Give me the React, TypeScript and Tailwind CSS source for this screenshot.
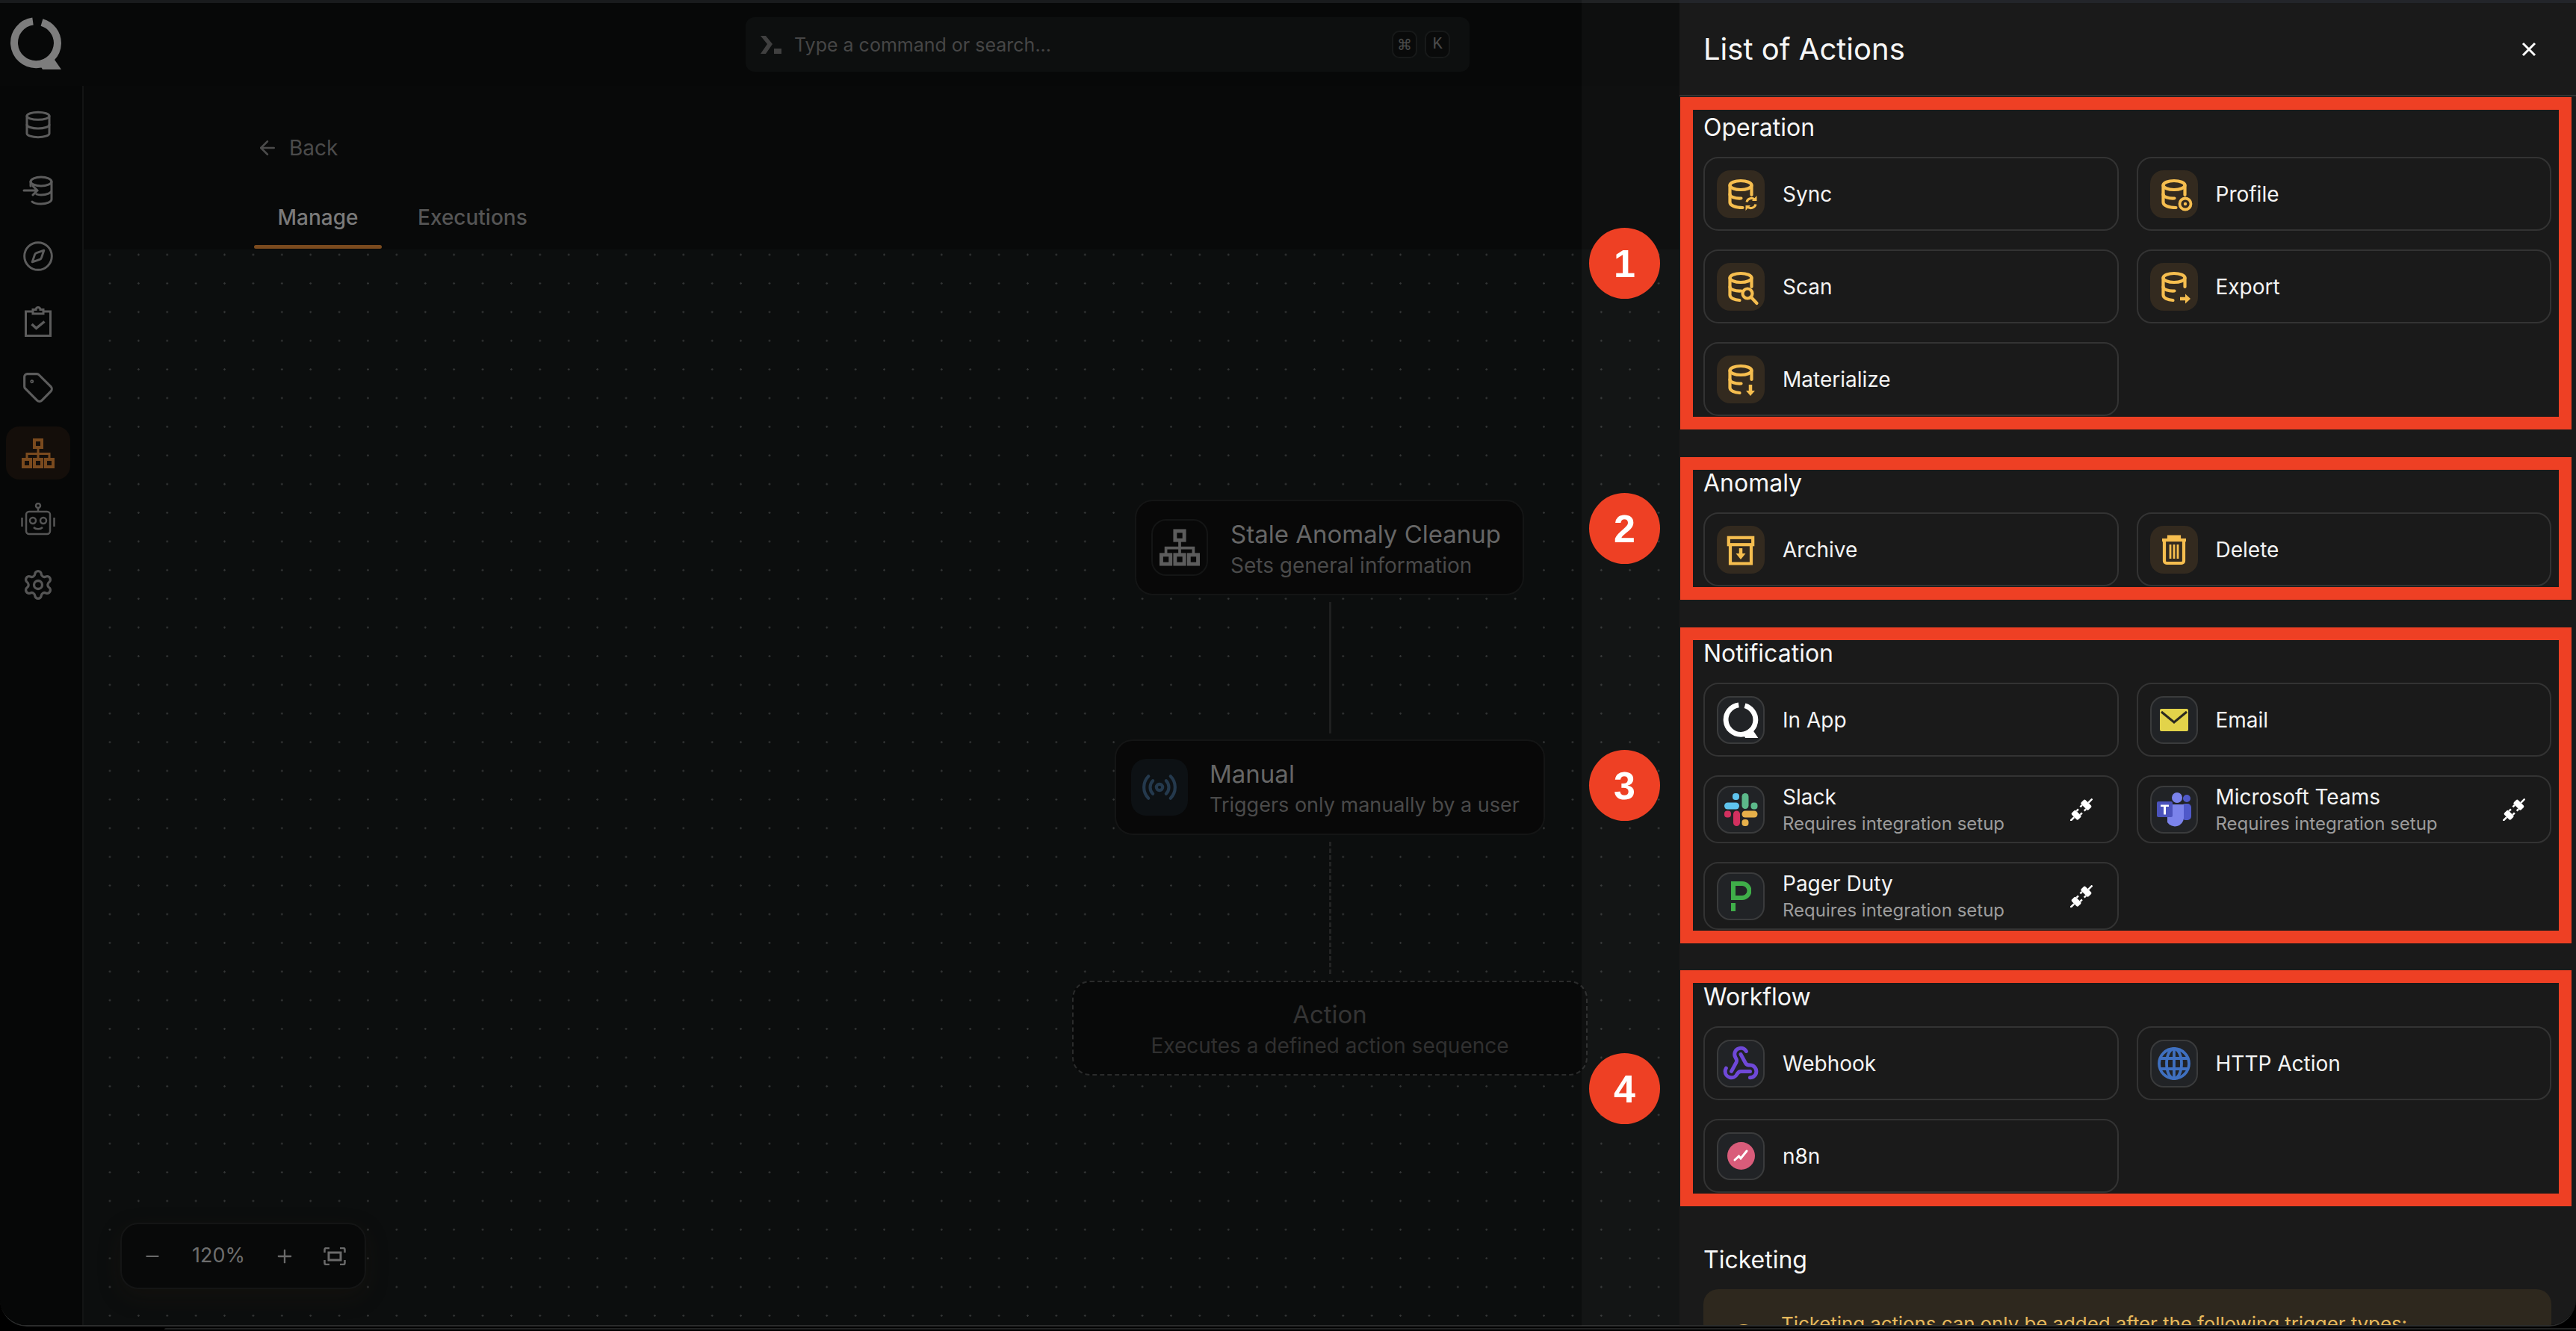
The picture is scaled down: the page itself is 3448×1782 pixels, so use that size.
import { ArrowLeft, Compass, Database, Minus, Plus, Radio, Settings, Tag, Webhook } from "lucide-react";
import type { ReactNode } from "react";

const amber = "#f6be4f";

function Sitemap({ size, color }: { size: number; color: string }) {
  return (
    <svg width={size} height={size} viewBox="0 0 44 44" fill="none" stroke={color} strokeWidth="4">
      <rect x="17" y="4" width="10" height="10" />
      <rect x="2" y="30" width="10" height="10" />
      <rect x="17" y="30" width="10" height="10" />
      <rect x="32" y="30" width="10" height="10" />
      <path d="M22 14v16M7 30v-7.500h30V30" strokeWidth="3" />
    </svg>
  );
}

function Logo({ size, color }: { size: number; color: string }) {
  return (
    <svg width={size} height={size} viewBox="0 0 70 70" fill="none">
      <path d="M31 5.500A29 29 0 1 0 64 35A29 29 0 0 0 43 7" stroke={color} strokeWidth="10" />
      <path d="M38 60L58 54L69 70H44Z" fill={color} />
    </svg>
  );
}

function DbArrow() {
  return (
    <svg width="42" height="40" viewBox="0 0 42 40" fill="none" stroke="#5c5c5c" strokeWidth="3" strokeLinecap="round">
      <ellipse cx="25" cy="8" rx="14" ry="6" />
      <path d="M39 8v24c0 3-6 6-14 6-6 0-10-1-12-3M11 8v6M39 20c0 3-6 6-14 6-2 0-4 0-6-1" />
      <path d="M2 20h18M14 14l6 6-6 6" />
    </svg>
  );
}

function ClipCheck() {
  return (
    <svg width="38" height="42" viewBox="0 0 38 42" fill="none" stroke="#5c5c5c" strokeWidth="3">
      <path d="M12 7H2.500v32.500h33V7H26" />
      <path d="M12 4.500h4a3 3 0 0 1 6 0h4V10H12Z" />
      <path d="M10.500 24l6 5.500 11-9" strokeWidth="3.500" />
    </svg>
  );
}

function Robot() {
  return (
    <svg width="46" height="44" viewBox="0 0 46 44" fill="none" stroke="#555" strokeWidth="2.500">
      <circle cx="23" cy="4" r="3" />
      <path d="M23 7v5" />
      <rect x="7" y="12" width="32" height="30" rx="4" />
      <circle cx="16" cy="24" r="4" />
      <circle cx="30" cy="24" r="4" />
      <path d="M17 33c3 3 9 3 12 0M1.500 20v12M44.500 20v12" />
    </svg>
  );
}

function PromptIcon() {
  return (
    <svg width="28" height="24" viewBox="0 0 28 24" fill="#404040">
      <path d="M0 0h7l9 11-9 13H0l9-13Z" />
      <rect x="18" y="17" width="10" height="7" />
    </svg>
  );
}

function FitIcon() {
  return (
    <svg width="30" height="24" viewBox="0 0 30 24" fill="none" stroke="#6a6a6a" strokeWidth="2.500">
      <path d="M1.500 7V3a2 2 0 0 1 2-2H8M22 1h4.500a2 2 0 0 1 2 2v4M28.500 17v4a2 2 0 0 1-2 2H22M8 23H3.500a2 2 0 0 1-2-2v-4" />
      <rect x="7" y="7" width="16" height="10" strokeWidth="3" />
    </svg>
  );
}

function DbBase({ children, short }: { children: ReactNode; short?: boolean }) {
  return (
    <svg width="64" height="64" viewBox="0 0 64 64" fill="none" stroke={amber} strokeWidth="4.200" strokeLinecap="round">
      <ellipse cx="32" cy="20" rx="14.500" ry="6" />
      <path d={short ? "M17.500 20v23c0 4 6 6.500 13 7M46.500 20v12" : "M17.500 20v23c0 4 7 7 17 7M46.500 20v13"} />
      <path d="M17.500 32c0 3.500 7 6 15 5.500" />
      {children}
    </svg>
  );
}

function SyncIcon() {
  return (
    <DbBase>
      <path d="M40 42.500a6.500 6.500 0 0 1 11-3M52 45.500a6.500 6.500 0 0 1-11 3" strokeWidth="3.200" strokeLinecap="butt" />
      <path d="M53.500 34v7h-6.500ZM38.500 54v-7h6.500Z" fill={amber} stroke="none" />
    </DbBase>
  );
}

function ProfileIcon() {
  return (
    <DbBase>
      <circle cx="47" cy="45" r="7.500" strokeWidth="3.800" />
      <circle cx="47" cy="45" r="2.200" fill={amber} stroke="none" />
    </DbBase>
  );
}

function ScanIcon() {
  return (
    <DbBase short>
      <circle cx="41" cy="41" r="6.500" />
      <path d="M46 46l7.500 8" />
    </DbBase>
  );
}

function ExportIcon() {
  return (
    <DbBase short>
      <path d="M40 48h8" strokeWidth="4.500" strokeLinecap="butt" />
      <path d="M47 41.500l7 6.500-7 6.500Z" fill={amber} stroke="none" />
    </DbBase>
  );
}

function MaterializeIcon() {
  return (
    <DbBase short>
      <path d="M45 39v9" strokeWidth="4.500" strokeLinecap="butt" />
      <path d="M39 47h12l-6 7Z" fill={amber} stroke="none" />
    </DbBase>
  );
}

function ArchiveIcon() {
  return (
    <svg width="64" height="64" viewBox="0 0 64 64" fill="none" stroke={amber} strokeWidth="4.200">
      <rect x="15.800" y="15.800" width="32.400" height="9.400" />
      <path d="M18 25v25.500h28V25" />
      <path d="M32 30v9" strokeWidth="4.500" />
      <path d="M25.500 37h13L32 45Z" fill={amber} stroke="none" />
    </svg>
  );
}

function TrashIcon() {
  return (
    <svg width="64" height="64" viewBox="0 0 64 64" fill="none" stroke={amber} strokeWidth="4.200">
      <path d="M16 19h32" />
      <path d="M25 17v-2.500h14V17" fill={amber} />
      <path d="M19 19v28a3 3 0 0 0 3 3h20a3 3 0 0 0 3-3V19" />
      <path d="M27 25v19M32 25v19M37 25v19" strokeWidth="2.800" />
    </svg>
  );
}

function EmailIcon() {
  return (
    <svg width="38" height="30" viewBox="0 0 38 30">
      <rect width="38" height="30" rx="2" fill="#e2d34a" />
      <path d="M2 4l17 14L36 4" fill="none" stroke="#2a2a20" strokeWidth="3" />
    </svg>
  );
}

function SlackIcon() {
  return (
    <svg width="45" height="44" viewBox="0 0 45 44">
      <rect x="11" y="0" width="9" height="9" rx="4" fill="#5fc4ee" />
      <rect x="0" y="12.500" width="20" height="9" rx="4.500" fill="#5fc4ee" />
      <rect x="23.500" y="0" width="9" height="21" rx="4.500" fill="#5cb98a" />
      <rect x="35.500" y="12.500" width="9" height="9" rx="4" fill="#5cb98a" />
      <rect x="0" y="23.500" width="9" height="9" rx="4" fill="#d2305f" />
      <rect x="12" y="23.500" width="9" height="20.500" rx="4.500" fill="#d2305f" />
      <rect x="23.500" y="23.500" width="21" height="9" rx="4.500" fill="#e6b04a" />
      <rect x="23.500" y="35" width="9" height="9" rx="4" fill="#e6b04a" />
    </svg>
  );
}

function TeamsIcon() {
  return (
    <svg width="46" height="46" viewBox="0 0 46 46">
      <circle cx="40" cy="8" r="5" fill="#5059c9" />
      <rect x="33" y="15" width="13" height="22" rx="5" fill="#5059c9" />
      <circle cx="27" cy="7" r="7" fill="#7b83eb" />
      <path d="M14 16h22v18a12 12 0 0 1-22 6Z" fill="#7b83eb" />
      <rect x="0" y="12" width="21" height="21" rx="2" fill="#4b53bc" />
      <path d="M5 16.500h11v2.500h-4v10.500H9V19H5Z" fill="#fff" />
    </svg>
  );
}

function PagerIcon() {
  return (
    <svg width="27" height="40" viewBox="0 0 27 40" fill="none">
      <path d="M3 25V3h12a9.500 9.500 0 0 1 0 19H3" stroke="#3fae49" strokeWidth="6" />
      <rect x="0" y="29" width="6" height="11" fill="#3fae49" />
    </svg>
  );
}

function GlobeIcon() {
  return (
    <svg width="44" height="44" viewBox="0 0 44 44" fill="none" stroke="#3f70c0" strokeWidth="3.800">
      <circle cx="22" cy="22" r="20" />
      <ellipse cx="22" cy="22" rx="10" ry="20" />
      <path d="M22 2v40M3 15h38M3 29h38" />
    </svg>
  );
}

function N8nIcon() {
  return (
    <svg width="37" height="37" viewBox="0 0 37 37">
      <circle cx="18.500" cy="18.500" r="18.500" fill="#d95c7a" />
      <path d="M10 24l5.500-5 2.500 3 8-10" fill="none" stroke="#fff" strokeWidth="3" strokeLinecap="round" />
    </svg>
  );
}

function PlugIcon() {
  return (
    <svg width="30" height="30" viewBox="0 0 30 30" fill="#fff">
      <g transform="rotate(-45 15 15)">
        <rect x="-6" y="14" width="7" height="2.500" />
        <rect x="1" y="9" width="8" height="12.500" rx="2" />
        <rect x="9" y="10.500" width="3.500" height="2.500" />
        <rect x="9" y="17.500" width="3.500" height="2.500" />
        <rect x="20" y="8" width="8" height="14" rx="2" />
        <rect x="16.500" y="10" width="3.500" height="2.500" />
        <rect x="16.500" y="17.500" width="3.500" height="2.500" />
        <rect x="28" y="13.800" width="7.500" height="2.500" />
      </g>
    </svg>
  );
}

const sideItems = [
  <Database key="db" size={40} strokeWidth={1.8} color="#5c5c5c" />,
  <DbArrow key="dba" />,
  <Compass key="compass" size={44} strokeWidth={1.6} color="#5c5c5c" />,
  <ClipCheck key="clip" />,
  <Tag key="tag" size={44} strokeWidth={1.7} color="#5c5c5c" />,
  <Sitemap key="flow" size={44} color="#7a4a1e" />,
  <Robot key="bot" />,
  <Settings key="gear" size={44} strokeWidth={1.8} color="#555" />,
];

function Card({ icon, label, sub, soft }: { icon: ReactNode; label: string; sub?: boolean; soft?: boolean }) {
  return (
    <div className={`flex items-center gap-6 rounded-[20px] border-2 border-[#333333] pl-4 pr-[33px] ${sub ? "h-[91px]" : "h-[99px]"}`}>
      <div className={`flex h-16 w-16 shrink-0 items-center justify-center rounded-[18px] ${soft ? "bg-[#332a1f]" : "border-2 border-[#3a3b3c] bg-[#212326]"}`}>
        {icon}
      </div>
      <div className={`min-w-0 flex-1 ${sub ? "pt-[3px]" : ""}`}>
        <div className="text-[28px] leading-9 text-[#f4f4f4]">{label}</div>
        {sub && <div className="text-[24px] leading-9 text-[#9c9c9c]">Requires integration setup</div>}
      </div>
      {sub && <PlugIcon />}
    </div>
  );
}

function Marked({ offset }: { offset: string }) {
  return <div className={`pointer-events-none absolute -left-[31px] -right-[27px] -bottom-[18px] border-[17px] border-[#ee4024] ${offset}`} />;
}

function Section({ title, children, mark }: { title: string; children?: ReactNode; mark?: string }) {
  return (
    <section className="relative">
      <h2 className="mb-[19px] h-10 text-[32px] font-normal leading-10 text-[#f7f7f7]">{title}</h2>
      {children && <div className="grid grid-cols-2 gap-x-6 gap-y-[25px]">{children}</div>}
      {mark && <Marked offset={mark} />}
    </section>
  );
}

function Badge({ n, className }: { n: number; className: string }) {
  return (
    <div className={`absolute left-[2127px] flex h-[95px] w-[95px] items-center justify-center rounded-full bg-[#ee4024] text-[52px] font-bold text-white [font-family:'Liberation_Sans',sans-serif] ${className}`}>
      {n}
    </div>
  );
}

export default function App() {
  return (
    <div className="relative h-[1782px] w-[3448px] overflow-hidden bg-black [font-family:Inter,sans-serif]">
      <div className="flex h-[1776px] overflow-hidden rounded-b-[36px] border-b-2 border-[#2b2c2c]">
        {/* dimmed app behind the drawer */}
        <div className="flex w-[2248px] shrink-0 flex-col bg-[#070808]">
          <div className="h-1 shrink-0 bg-[#191b1d]" />
          <header className="relative flex h-[111px] shrink-0 items-start pl-[13px] pt-[19px]">
            <Logo size={70} color="#7d7d7d" />
            <div className="ml-[915px] flex h-[73px] w-[969px] items-center rounded-xl bg-[#0d0f0f] pl-5 pr-[26px]">
              <PromptIcon />
              <span className="ml-[17px] flex-1 pt-[3px] text-[25px] text-[#464646]">Type a command or search...</span>
              <kbd className="flex h-[37px] w-[34px] items-center justify-center rounded-[10px] border-2 border-[#171919] bg-[#090a0a] text-[20px] text-[#4a4a4a] [font-family:'DejaVu_Sans',sans-serif]">⌘</kbd>
              <kbd className="ml-[10px] flex h-[37px] w-[34px] items-center justify-center rounded-[10px] border-2 border-[#171919] bg-[#090a0a] text-[22px] text-[#4a4a4a]">K</kbd>
            </div>
          </header>
          <div className="flex min-h-0 flex-1">
            <aside className="flex w-[112px] shrink-0 flex-col items-center gap-[17px] border-r-2 border-[#131414] bg-[#060707] pr-2 pt-[16px]">
              {sideItems.map((icon, i) => (
                <div key={i} className={`flex h-[71px] w-[86px] items-center justify-center rounded-[18px] ${i === 5 ? "bg-[#140e0a]" : ""}`}>
                  {icon}
                </div>
              ))}
            </aside>
            <main className="flex min-w-0 flex-1 flex-col">
              <div className="h-[219px] shrink-0 bg-[#080909] pl-[228px] pt-[65px]">
                <div className="ml-[3px] flex h-9 items-center gap-[14px] text-[28px] text-[#4b4b4b]">
                  <ArrowLeft size={30} strokeWidth={2} color="#4b4b4b" />
                  Back
                </div>
                <div className="mt-[34px] flex gap-4">
                  <div className="flex w-[171px] flex-col">
                    <div className="flex h-[78px] items-center justify-center pt-[3px] text-[28px] font-medium text-[#7a7a7a]">Manage</div>
                    <div className="h-[5px] rounded-full bg-[#7a4a1e]" />
                  </div>
                  <div className="flex h-[78px] items-center px-8 pt-[3px] text-[28px] font-medium text-[#555555]">Executions</div>
                </div>
              </div>
              <div className="relative min-h-0 flex-1 bg-[#0c0e0e] bg-[radial-gradient(circle,#343636_1px,transparent_1.5px)] bg-[length:38.4px_38.4px] bg-[position:15.8px_-12.200px]">
                <div className="absolute left-[1407px] top-[335px] flex h-[128px] w-[521px] items-center gap-[30px] rounded-3xl border-2 border-[#141515] bg-[#080808] pl-5">
                  <div className="flex h-[76px] w-[76px] items-center justify-center rounded-[20px] border-2 border-[#141515]">
                    <Sitemap size={54} color="#5c5c5c" />
                  </div>
                  <div className="pt-[3px]">
                    <div className="whitespace-nowrap text-[33px] leading-[44px] text-[#666666]">Stale Anomaly Cleanup</div>
                    <div className="whitespace-nowrap text-[28px] leading-[40px] text-[#4a4a4a]">Sets general information</div>
                  </div>
                </div>
                <div className="absolute left-[1667px] top-[472px] h-[176px] w-[3px] bg-[#1f2020]" />
                <div className="absolute left-[1380px] top-[656px] flex h-[128px] w-[576px] items-center gap-[29px] rounded-3xl border-2 border-[#141515] bg-[#080808] pl-5">
                  <div className="flex h-[76px] w-[76px] items-center justify-center rounded-[20px] bg-[#0d1114]">
                    <Radio size={50} strokeWidth={2} color="#24394d" />
                  </div>
                  <div className="pt-[3px]">
                    <div className="text-[33px] leading-[44px] text-[#666666]">Manual</div>
                    <div className="whitespace-nowrap text-[27px] leading-[40px] text-[#4a4a4a]">Triggers only manually by a user</div>
                  </div>
                </div>
                <div className="absolute left-[1667px] top-[793px] h-[177px] border-l-[3px] border-dashed border-[#232424]" />
                <div className="absolute left-[1323px] top-[979px] flex h-[127px] w-[690px] flex-col items-center justify-center rounded-3xl border-2 border-dashed border-[#2a2b2b] bg-[#080909] pt-[2px]">
                  <div className="text-[33px] leading-[44px] text-[#343434]">Action</div>
                  <div className="text-[28px] leading-[40px] text-[#303030]">Executes a defined action sequence</div>
                </div>
                <div className="absolute left-[49px] top-[1303px] flex h-[89px] w-[329px] items-center rounded-3xl border-2 border-[#141515] bg-[#080909] pl-[28px] shadow-[0_10px_30px_rgba(40,28,16,0.25)]">
                  <Minus size={26} strokeWidth={2} color="#6a6a6a" />
                  <span className="ml-[40px] w-[68px] text-[27px] text-[#6e6e6e]">120%</span>
                  <Plus size={28} strokeWidth={2} className="ml-[42px]" color="#6a6a6a" />
                  <span className="ml-[38px]">
                    <FitIcon />
                  </span>
                </div>
              </div>
            </main>
          </div>
        </div>

        {/* drawer */}
        <div className="flex w-[1200px] shrink-0 flex-col bg-[#1a1a1a]">
          <div className="h-1 shrink-0 bg-[#23252a]" />
          <div className="flex h-[125px] shrink-0 items-center justify-between border-b-2 border-[#333333] pl-8 pr-[53px]">
            <h1 className="text-[40px] font-normal text-[#f7f7f7]">List of Actions</h1>
            <svg width="20" height="20" viewBox="0 0 20 20" stroke="#fff" strokeWidth="3">
              <path d="M2 2l16 16M18 2L2 18" />
            </svg>
          </div>
          <div className="flex flex-col gap-[70px] pl-8 pr-[33px] pt-[22px]">
            <Section title="Operation" mark="-top-[21px]">
              <Card soft icon={<SyncIcon />} label="Sync" />
              <Card soft icon={<ProfileIcon />} label="Profile" />
              <Card soft icon={<ScanIcon />} label="Scan" />
              <Card soft icon={<ExportIcon />} label="Export" />
              <Card soft icon={<MaterializeIcon />} label="Materialize" />
            </Section>
            <Section title="Anomaly" mark="-top-[15px]">
              <Card soft icon={<ArchiveIcon />} label="Archive" />
              <Card soft icon={<TrashIcon />} label="Delete" />
            </Section>
            <Section title="Notification" mark="-top-[15px]">
              <Card icon={<Logo size={48} color="#ffffff" />} label="In App" />
              <Card icon={<EmailIcon />} label="Email" />
              <Card sub icon={<SlackIcon />} label="Slack" />
              <Card sub icon={<TeamsIcon />} label="Microsoft Teams" />
              <Card sub icon={<PagerIcon />} label="Pager Duty" />
            </Section>
            <Section title="Workflow" mark="-top-[16px]">
              <Card icon={<Webhook size={50} strokeWidth={2.4} color="#6f48d8" />} label="Webhook" />
              <Card icon={<GlobeIcon />} label="HTTP Action" />
              <Card icon={<N8nIcon />} label="n8n" />
            </Section>
            <Section title="Ticketing">
              <div className="col-span-2 flex h-[160px] gap-[34px] rounded-[20px] bg-[#2e281e] pl-[38px] pt-[29px]">
                <div className="mt-[18px] h-8 w-8 rounded-full border-[3px] border-[#e6b95c]" />
                <p className="text-[26px] leading-9 tracking-[-0.1px] text-[#e6b95c]">Ticketing actions can only be added after the following trigger types:</p>
              </div>
            </Section>
          </div>
        </div>
      </div>
      <div className="ml-[220px] mt-[2px] h-[2px] rounded-tl-xl bg-[#222323]" />

      {/* lighter band and numbered markers sit over the page */}
      <div className="pointer-events-none absolute left-[2117px] top-0 h-[1775px] w-[131px] bg-white/[0.03]" />
      <Badge n={1} className="top-[305px]" />
      <Badge n={2} className="top-[660px]" />
      <Badge n={3} className="top-[1004px]" />
      <Badge n={4} className="top-[1410px]" />
    </div>
  );
}
